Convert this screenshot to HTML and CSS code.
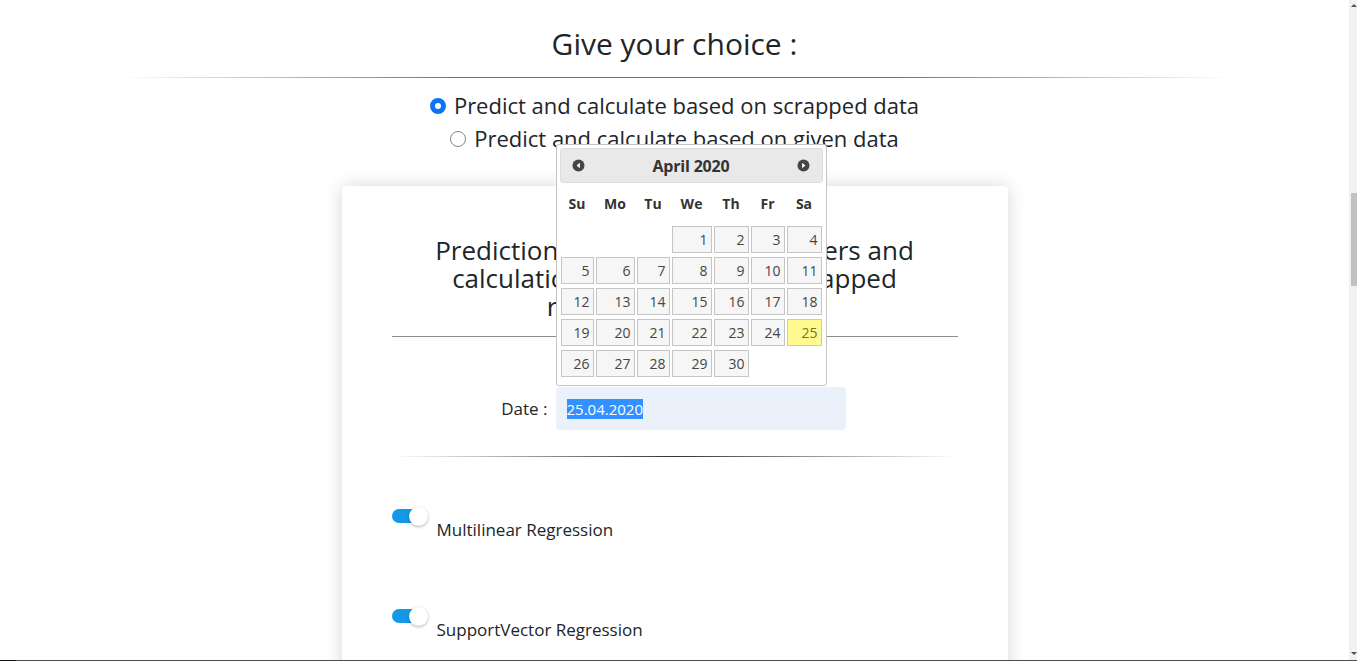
FILE: index.html
```html
<!DOCTYPE html>
<html lang="en">
<head>
<meta charset="utf-8">
<title>Give your choice</title>
<link rel="stylesheet" href="styles.css">
</head>
<body>
<div class="page">
  <h1 class="title">Give your choice :</h1>
  <hr class="rule-top">
  <div class="choices">
    <label class="choice"><span class="radio radio-on"></span>Predict and calculate based on scrapped data</label>
    <label class="choice"><span class="radio"></span>Predict and calculate based on given data</label>
  </div>

  <div class="card">
    <h2 class="card-title">Prediction of the covid-19 numbers and<br>calculation based on newly scrapped<br>records of given date</h2>
    <hr class="rule-solid">
    <div class="date-row">
      <span class="date-label">Date :</span>
      <div class="date-field">
        <div class="date-input"><span class="selected-text">25.04.2020</span></div>
        <div class="datepicker">
          <div class="dp-header">
            <span class="dp-nav"><svg width="13" height="13" viewBox="0 0 13 13"><circle cx="6.5" cy="6.5" r="6" fill="#454545"/><path d="M7.9 3.8 L4.6 6.5 L7.9 9.2 Z" fill="#fff"/></svg></span>
            <span class="dp-title">April 2020</span>
            <span class="dp-nav"><svg width="13" height="13" viewBox="0 0 13 13"><circle cx="6.5" cy="6.5" r="6" fill="#454545"/><path d="M5.1 3.8 L8.4 6.5 L5.1 9.2 Z" fill="#fff"/></svg></span>
          </div>
          <div class="dp-grid">
            <span class="dp-dow">Su</span><span class="dp-dow">Mo</span><span class="dp-dow">Tu</span><span class="dp-dow">We</span><span class="dp-dow">Th</span><span class="dp-dow">Fr</span><span class="dp-dow">Sa</span>
            <span class="dp-empty"></span><span class="dp-empty"></span><span class="dp-empty"></span>
            <span class="dp-day">1</span><span class="dp-day">2</span><span class="dp-day">3</span><span class="dp-day">4</span>
            <span class="dp-day">5</span><span class="dp-day">6</span><span class="dp-day">7</span><span class="dp-day">8</span><span class="dp-day">9</span><span class="dp-day">10</span><span class="dp-day">11</span>
            <span class="dp-day">12</span><span class="dp-day">13</span><span class="dp-day">14</span><span class="dp-day">15</span><span class="dp-day">16</span><span class="dp-day">17</span><span class="dp-day">18</span>
            <span class="dp-day">19</span><span class="dp-day">20</span><span class="dp-day">21</span><span class="dp-day">22</span><span class="dp-day">23</span><span class="dp-day">24</span><span class="dp-day dp-today">25</span>
            <span class="dp-day">26</span><span class="dp-day">27</span><span class="dp-day">28</span><span class="dp-day">29</span><span class="dp-day">30</span>
          </div>
        </div>
      </div>
    </div>
    <hr class="rule-fade">
    <div class="switch-row">
      <span class="switch"><span class="switch-track"></span><span class="switch-knob"></span></span>
      <span class="switch-label">Multilinear Regression</span>
    </div>
    <div class="switch-row">
      <span class="switch"><span class="switch-track"></span><span class="switch-knob"></span></span>
      <span class="switch-label">SupportVector Regression</span>
    </div>
  </div>
</div>

<div class="scrollbar">
  <span class="sb-arrow sb-up"></span>
  <span class="sb-thumb"></span>
  <span class="sb-arrow sb-down"></span>
</div>
<div class="bottom-line"></div>
</body>
</html>
```
FILE: styles.css
```css
html, body {
  margin: 0;
  padding: 0;
  height: 100%;
  overflow: hidden;
  background: #fff;
}

body {
  font-family: "Open Sans", "Noto Sans", sans-serif;
  color: #212529;
}

.page {
  margin-right: 8px;
  display: flex;
  flex-direction: column;
  align-items: center;
}

.title {
  margin: 24px 0 0;
  font-size: 30px;
  line-height: 40px;
  font-weight: 400;
  color: #212529;
}

.rule-top {
  width: 1110px;
  height: 1px;
  margin: 13px 0 0;
  border: 0;
  background: linear-gradient(to right, rgba(0,0,0,0), rgba(0,0,0,0.55) 30%, rgba(0,0,0,0.55) 70%, rgba(0,0,0,0));
}

.choices {
  margin-top: 11px;
  display: flex;
  flex-direction: column;
  align-items: center;
}

.choice {
  display: flex;
  align-items: center;
  gap: 8px;
  font-size: 22px;
  line-height: 33px;
  color: #212529;
}

.radio {
  width: 14px;
  height: 14px;
  border: 1px solid #858585;
  border-radius: 50%;
  background: #fff;
  box-sizing: content-box;
}

.radio-on {
  width: 6px;
  height: 6px;
  border: 5px solid #0b76f5;
}

.card {
  margin-top: 31px;
  width: 566px;
  padding: 50px 50px 0;
  height: 480px;
  background: #fff;
  border-radius: 4px;
  box-shadow: 0 0 18px rgba(0,0,0,0.16);
  display: flex;
  flex-direction: column;
}

.card-title {
  margin: 0;
  font-size: 26px;
  line-height: 28px;
  font-weight: 400;
  text-align: center;
  color: #212529;
}

.rule-solid {
  margin: 16px 0 0;
  border: 0;
  height: 1px;
  background: #8e8e8e;
}

.date-row {
  margin-top: 50px;
  display: grid;
  grid-template-columns: 156px 290px;
  column-gap: 8px;
  align-items: center;
}

.date-label {
  font-size: 17px;
  text-align: right;
  color: #212529;
}

.date-field {
  position: relative;
}

.date-input {
  width: 290px;
  height: 43px;
  box-sizing: border-box;
  padding: 0 11px;
  background: #ebf1fa;
  border-radius: 4px;
  display: flex;
  align-items: center;
  font-size: 15px;
}

.selected-text {
  background: #3390ff;
  color: #fff;
  line-height: 20px;
}

.datepicker {
  position: absolute;
  left: 0;
  bottom: calc(100% + 1px);
  width: 271px;
  box-sizing: border-box;
  padding: 3px 3px 8px;
  background: #fff;
  border: 1px solid #c5c5c5;
  border-radius: 3px;
}

.dp-header {
  height: 35px;
  box-sizing: border-box;
  background: #e9e9e9;
  border: 1px solid #dddddd;
  border-radius: 3px;
  display: flex;
  align-items: center;
  justify-content: space-between;
  padding: 0 11px;
}

.dp-nav {
  display: flex;
  width: 13px;
  height: 13px;
}

.dp-title {
  font-weight: 700;
  font-size: 16px;
  color: #333;
  letter-spacing: -0.2px;
}

.dp-grid {
  margin: 2px 1px 0;
  display: grid;
  grid-template-columns: 33px 39px 33px 40px 35px 34px 35px;
  grid-template-rows: 37px repeat(5, 27px);
  column-gap: 2px;
  row-gap: 4px;
}

.dp-dow {
  display: flex;
  align-items: center;
  justify-content: center;
  font-weight: 700;
  font-size: 14px;
  color: #333;
}

.dp-day {
  box-sizing: border-box;
  border: 1px solid #c5c5c5;
  background: #f6f6f6;
  color: #454545;
  font-size: 14px;
  line-height: 25px;
  text-align: right;
  padding-right: 3px;
}

.dp-today {
  background: #fffa90;
  border-color: #dad55e;
  color: #777620;
}

.rule-fade {
  margin: 26px 0 0;
  border: 0;
  height: 1px;
  background: linear-gradient(to right, rgba(0,0,0,0), rgba(0,0,0,0.8), rgba(0,0,0,0));
}

.switch-row {
  margin-top: 50px;
  margin-bottom: 15px;
  display: flex;
  align-items: flex-start;
  gap: 9px;
}

.switch {
  position: relative;
  width: 36px;
  height: 20px;
  flex: none;
}

.switch-track {
  position: absolute;
  left: 0;
  top: 2px;
  width: 28px;
  height: 14px;
  border-radius: 7px;
  background: #1499e8;
}

.switch-knob {
  position: absolute;
  left: 17px;
  top: 0;
  width: 19px;
  height: 19px;
  border-radius: 50%;
  background: #fff;
  box-shadow: 0 1px 3px rgba(0,0,0,0.3);
}

.switch-label {
  margin-top: 11px;
  font-size: 17px;
  line-height: 24px;
  color: #212529;
}

.scrollbar {
  position: fixed;
  top: 0;
  right: 0;
  width: 8px;
  height: 100%;
  background: #f1f1f1;
}

.sb-thumb {
  position: absolute;
  left: 2px;
  right: 0;
  top: 193px;
  height: 93px;
  background: #c1c1c1;
}

.sb-arrow {
  position: absolute;
  left: 2px;
  width: 0;
  height: 0;
  border-left: 3px solid transparent;
  border-right: 3px solid transparent;
}

.sb-up {
  top: 4px;
  border-bottom: 3px solid #505050;
}

.sb-down {
  bottom: 6px;
  border-top: 3px solid #505050;
}

.bottom-line {
  position: fixed;
  left: 0;
  right: 0;
  bottom: 0;
  height: 1px;
  background: linear-gradient(to right, #111 16px, #4d4d4d 16px);
}
```
